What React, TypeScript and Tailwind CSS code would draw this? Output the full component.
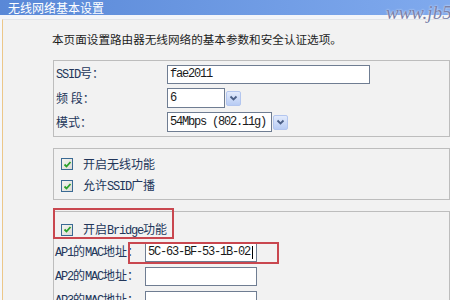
import React from "react";

const CJK = { fontFamily: '"Noto Sans CJK SC", "Noto Sans", sans-serif' };
const MONO = { fontFamily: '"Liberation Mono", "Noto Sans CJK SC", monospace' };

function L({ t }: { t: string }) {
  const parts = t.match(/[A-Za-z0-9\-\.\(\) ]+|[^A-Za-z0-9\-\.\(\) ]+/g) || [];
  return (
    <>
      {parts.map((p, i) =>
        /[A-Za-z0-9]/.test(p) ? (
          <span key={i} style={MONO} className="text-[12px] tracking-[-1.2px]">
            {p}
          </span>
        ) : (
          <span key={i} style={CJK}>
            {p}
          </span>
        )
      )}
    </>
  );
}

function Check() {
  return (
    <div className="w-[12px] h-[12px] border border-[#3a6a94] bg-gradient-to-br from-[#f4f4f0] to-[#dcdcd6] flex items-center justify-center shrink-0">
      <svg width="9" height="9" viewBox="0 0 9 9">
        <polyline points="1.5,4.5 3.5,6.5 7.5,2" fill="none" stroke="#2aa12a" strokeWidth="1.8" />
      </svg>
    </div>
  );
}

function DropBtn() {
  return (
    <div className="w-[15px] h-[15px] rounded-[2px] border border-[#b3c6ef] bg-gradient-to-b from-[#e3ebfc] to-[#b8ccf4] flex items-center justify-center shrink-0">
      <svg width="9" height="7" viewBox="0 0 9 7">
        <polyline points="1.5,1.5 4.5,4.5 7.5,1.5" fill="none" stroke="#4b5f86" strokeWidth="1.8" />
      </svg>
    </div>
  );
}

function Input({ w, value, caret }: { w: number; value?: string; caret?: boolean }) {
  return (
    <div
      className="h-[19px] border border-[#6f7d92] bg-white flex items-center pl-[2px] text-[#1a1a1a]"
      style={{ width: w }}
    >
      {value && (
        <span style={MONO} className="text-[12px] tracking-[-1.2px] leading-[14px]">
          {value}
        </span>
      )}
      {caret && <span className="w-[1px] h-[13px] bg-black ml-[2px]" />}
    </div>
  );
}

function Select({ w, value }: { w: number; value: string }) {
  return (
    <div className="flex items-center gap-[1px]">
      <div
        className="h-[20px] border border-[#6f7d92] bg-white flex items-center pl-[2px] text-[#1a1a1a]"
        style={{ width: w }}
      >
        <span style={MONO} className="text-[12px] tracking-[-1.2px] leading-[14px] whitespace-pre">
          {value}
        </span>
      </div>
      <DropBtn />
    </div>
  );
}

export default function App() {
  const label = "text-[12px] leading-[14px] text-[#22365a] whitespace-pre";
  return (
    <div className="relative w-[450px] h-[300px] overflow-hidden bg-[#f5f7fb]" style={CJK}>
      <div className="h-[15px] bg-gradient-to-r from-[#5988d7] to-[#80aaee] text-white text-[12px] leading-[15px] pl-[8px]">
        无线网络基本设置
      </div>
      <div className="h-[4px] bg-[#f3f5f9]" />
      <div className="ml-[2px] h-[281px] border-l border-t border-l-[#ecc789] border-t-[#e2e4e8] bg-[#f2f2f2]">
        <p className="pl-[49px] pt-[12px] text-[11.6px] leading-[14px] text-[#1c1c1c] whitespace-nowrap">
          本页面设置路由器无线网络的基本参数和安全认证选项。
        </p>

        <div className="ml-[50px] mt-[14px] w-[397px] h-[77px] border border-[#bdbdbd] pt-[1px] pl-[2px]">
          <div className="h-[24px] flex items-center">
            <div className={label + " w-[111px]"}>
              <L t="SSID号：" />
            </div>
            <Input w={203} value="fae2011" />
          </div>
          <div className="h-[24px] flex items-center">
            <div className={label + " w-[111px]"}>
              <L t="频 段：" />
            </div>
            <Select w={58} value="6" />
          </div>
          <div className="h-[24px] flex items-center">
            <div className={label + " w-[111px]"}>
              <L t="模式：" />
            </div>
            <Select w={105} value="54Mbps (802.11g)" />
          </div>
        </div>

        <div className="ml-[50px] mt-[11px] w-[397px] h-[52px] border border-[#bdbdbd] pt-[4px] pl-[7px]">
          <div className="h-[22px] flex items-center gap-[10px]">
            <Check />
            <span className={label}>
              <L t="开启无线功能" />
            </span>
          </div>
          <div className="h-[22px] flex items-center gap-[10px]">
            <Check />
            <span className={label}>
              <L t="允许SSID广播" />
            </span>
          </div>
        </div>

        <div className="ml-[50px] mt-[11px] w-[397px] h-[120px] border border-[#bdbdbd] pt-[7px]">
          <div className="h-[21px] flex items-center gap-[10px] pl-[7px]">
            <Check />
            <span className={label}>
              <L t="开启Bridge功能" />
            </span>
          </div>
          {["AP1的MAC地址：", "AP2的MAC地址：", "AP3的MAC地址："].map((t, i) => (
            <div key={t} className="h-[24px] flex items-center pl-[1px]">
              <div className={label + " w-[90px]"}>
                <L t={t} />
              </div>
              <Input w={112} value={i === 0 ? "5C-63-BF-53-1B-02" : undefined} caret={i === 0} />
            </div>
          ))}
        </div>
      </div>

      <div
        className="absolute left-[386px] top-[3px] text-[19px] italic text-[#7a80a8] leading-[20px] whitespace-nowrap"
        style={{ fontFamily: '"Liberation Serif", serif', textShadow: "0 0 2px #fff" }}
      >
        www.jb51.net
      </div>

      <div className="absolute left-[53px] top-[208px] w-[121px] h-[31px] border-2 border-[#c9474f]" />
      <div className="absolute left-[128px] top-[242px] w-[151px] h-[22px] border-2 border-[#c9474f]" />
    </div>
  );
}
